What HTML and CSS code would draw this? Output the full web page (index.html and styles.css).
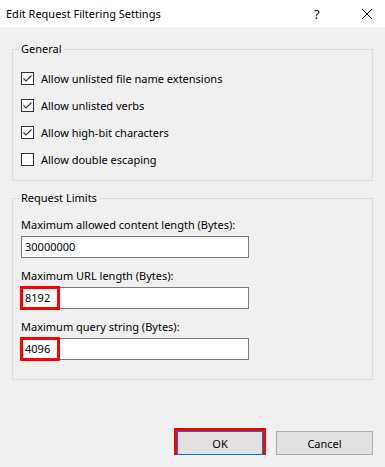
FILE: index.html
```html
<!DOCTYPE html>
<html lang="en">
<head>
  <meta charset="UTF-8">
  <title>Edit Request Filtering Settings</title>
  <link rel="stylesheet" href="styles.css">
</head>
<body>
  <div class="titlebar">
    <span class="title">Edit Request Filtering Settings</span>
    <span class="help">?</span>
    <span class="close">
      <svg width="12" height="12" viewBox="0 0 12 12"><path d="M1 1 L11 11 M11 1 L1 11" stroke="#000" stroke-width="1" fill="none"/></svg>
    </span>
  </div>

  <div class="content">
    <fieldset class="group general">
      <legend>General</legend>
      <div class="group-body">
        <label class="check"><span class="box checked"><svg width="11" height="11" viewBox="0 0 11 11"><path d="M1.5 5.5 L4 8 L9.5 2.5" stroke="#333" stroke-width="1.1" fill="none"/></svg></span>Allow unlisted file name extensions</label>
        <label class="check"><span class="box checked"><svg width="11" height="11" viewBox="0 0 11 11"><path d="M1.5 5.5 L4 8 L9.5 2.5" stroke="#333" stroke-width="1.1" fill="none"/></svg></span>Allow unlisted verbs</label>
        <label class="check"><span class="box checked"><svg width="11" height="11" viewBox="0 0 11 11"><path d="M1.5 5.5 L4 8 L9.5 2.5" stroke="#333" stroke-width="1.1" fill="none"/></svg></span>Allow high-bit characters</label>
        <label class="check"><span class="box"></span>Allow double escaping</label>
      </div>
    </fieldset>

    <fieldset class="group limits">
      <legend>Request Limits</legend>
      <div class="group-body">
        <div class="field first">
          <div class="field-label">Maximum allowed content length (Bytes):</div>
          <div class="input-wrap"><div class="input">30000000</div></div>
        </div>
        <div class="field">
          <div class="field-label">Maximum URL length (Bytes):</div>
          <div class="input-wrap"><div class="input">8192</div><span class="mark mark-url"></span></div>
        </div>
        <div class="field">
          <div class="field-label">Maximum query string (Bytes):</div>
          <div class="input-wrap"><div class="input">4096</div><span class="mark"></span></div>
        </div>
      </div>
    </fieldset>

    <div class="footer">
      <button class="btn ok">OK</button>
      <button class="btn cancel">Cancel</button>
    </div>
  </div>
</body>
</html>
```

FILE: styles.css
```css
body {
  margin: 0;
  background-color: #f0f0f0;
  font-family: "Noto Sans", "Liberation Sans", sans-serif;
  font-size: 11px;
  color: #000;
}

.titlebar {
  height: 27px;
  background: white;
  display: flex;
  align-items: center;
  padding-left: 6px;
}

.title {
  flex: 1;
}

.help {
  width: 14px;
  margin-right: 33px;
  font-size: 13px;
}

.close {
  width: 12px;
  margin-right: 12px;
  display: flex;
}

.content {
  padding: 0 12px;
}

.group {
  margin: 0;
  padding: 0;
  border: 1px solid #dcdcdc;
  min-width: 0;
}

.group legend {
  margin-left: 6px;
  padding: 0 2px;
  line-height: 16px;
}

.general {
  margin-top: 14px;
}

.general .group-body {
  padding: 8px 8px 7px;
}

.check {
  display: flex;
  align-items: center;
  height: 27px;
}

.box {
  width: 11px;
  height: 11px;
  border: 1px solid #333;
  background: white;
  margin-right: 7px;
  display: flex;
}

.limits {
  margin-top: 9px;
}

.limits .group-body {
  padding: 11px 8px 19px;
}

.field {
  margin-top: 10px;
}

.field.first {
  margin-top: 0;
}

.field-label {
  line-height: 16px;
  margin-bottom: 3px;
}

.input-wrap {
  position: relative;
  width: 228px;
}

.input {
  height: 20px;
  line-height: 20px;
  border: 1px solid #7a7a7a;
  background: white;
  padding-left: 3px;
}

.mark {
  position: absolute;
  left: -1px;
  top: -1px;
  width: 34px;
  height: 18px;
  border: 3px solid #ff0000;
}

.footer {
  display: flex;
  justify-content: flex-end;
  margin-top: 51px;
}

.btn {
  font-family: inherit;
  font-size: 11px;
  background: #e1e1e1;
  border: 1px solid #adadad;
  height: 24px;
  padding: 0;
}

.ok {
  width: 86px;
  border-color: #0078d7;
  box-shadow: 0 0 0 3px #ff0000;
  margin-right: 13px;
}

.cancel {
  width: 97px;
}
```
